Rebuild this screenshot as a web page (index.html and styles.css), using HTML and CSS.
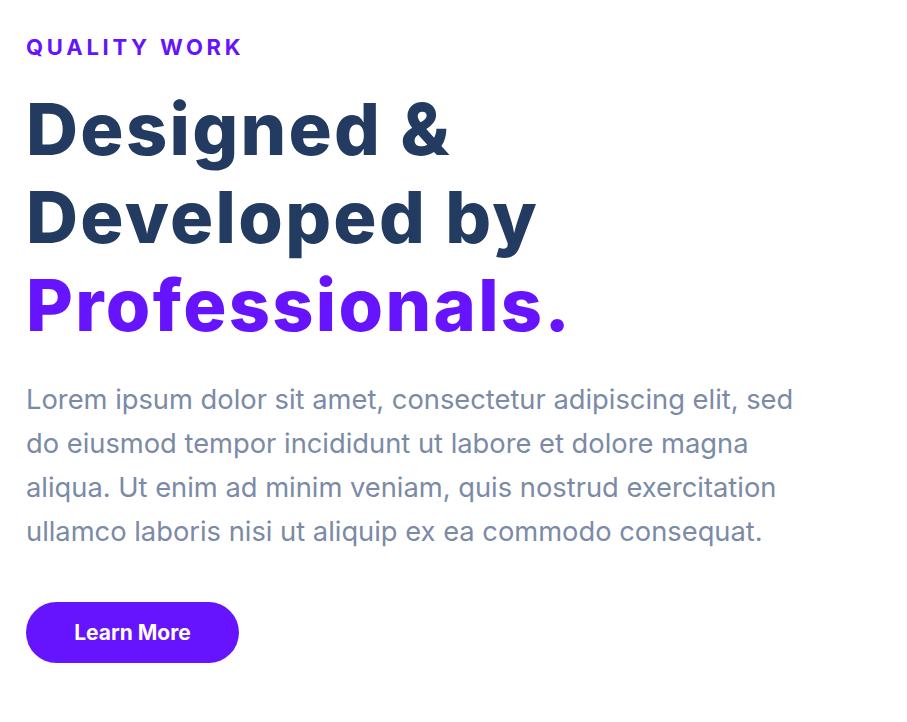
FILE: index.html
```html
<!DOCTYPE html>
<html lang="en">
<head>
<meta charset="utf-8">
<title>Quality Work</title>
<link rel="stylesheet" href="styles.css">
</head>
<body>
<section class="hero">
  <p class="eyebrow">QUALITY WORK</p>
  <h1 class="title">Designed &amp;<br>Developed by<br><span class="accent">Professionals.</span></h1>
  <p class="lead">Lorem ipsum dolor sit amet, consectetur adipiscing elit, sed do eiusmod tempor incididunt ut labore et dolore magna aliqua. Ut enim ad minim veniam, quis nostrud exercitation ullamco laboris nisi ut aliquip ex ea commodo consequat.</p>
  <a class="btn" href="#">Learn More</a>
</section>
</body>
</html>
```
FILE: styles.css
```css
* { box-sizing: border-box; }
html, body { margin: 0; padding: 0; background: #ffffff; }
body { font-family: Inter, "Noto Sans", sans-serif; }
.hero {
  padding: 33px 26px;
  display: flex;
  flex-direction: column;
  align-items: flex-start;
}
.eyebrow {
  margin: 0;
  font-size: 22px;
  font-weight: 700;
  letter-spacing: 0.17em;
  color: #6514fd;
  line-height: 28px;
}
.title {
  margin: 24px 0 0;
  font-size: 72px;
  font-weight: 800;
  line-height: 88px;
  color: #233a61;
  letter-spacing: 0.032em;
}
.accent { color: #6514fd; }
.lead {
  margin: 29px 0 0;
  max-width: 800px;
  font-size: 27.3px;
  line-height: 44px;
  color: #7b8aa6;
}
.btn {
  margin-top: 48px;
  display: inline-flex;
  align-items: center;
  justify-content: center;
  width: 213px;
  height: 61px;
  border-radius: 31px;
  background: #6514fd;
  color: #ffffff;
  font-weight: 700;
  font-size: 21px;
  text-decoration: none;
}
```
